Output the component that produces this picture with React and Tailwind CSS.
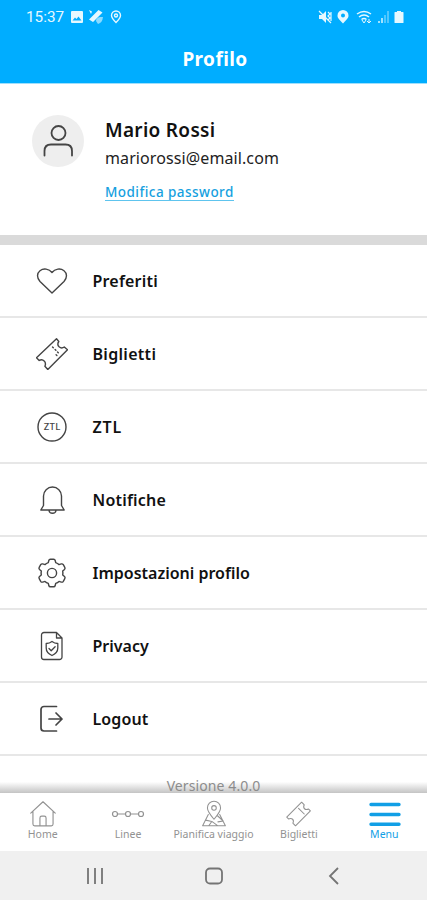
const menuItems = [
  { label: 'Preferiti', Icon: HeartIcon, tracking: 'tracking-[0.2px]' },
  { label: 'Biglietti', Icon: TicketIcon, tracking: 'tracking-[0.3px]' },
  { label: 'ZTL', Icon: ZtlIcon, tracking: 'tracking-[0.8px]' },
  { label: 'Notifiche', Icon: BellIcon, tracking: 'tracking-[0.2px]' },
  { label: 'Impostazioni profilo', Icon: GearIcon, tracking: 'tracking-[0px]' },
  { label: 'Privacy', Icon: PrivacyIcon, tracking: 'tracking-[0px]' },
  { label: 'Logout', Icon: LogoutIcon, tracking: 'tracking-[0.1px]' },
];

const tabs = [
  { label: 'Home', Icon: HomeIcon },
  { label: 'Linee', Icon: LinesIcon },
  { label: 'Pianifica viaggio', Icon: MapIcon },
  { label: 'Biglietti', Icon: SmallTicketIcon },
  { label: 'Menu', Icon: MenuIcon, active: true },
];

function LineIcon({ children, className = 'w-8 h-8', strokeWidth = 1.4 }) {
  return (
    <svg viewBox="0 0 32 32" className={className} fill="none" stroke="currentColor" strokeWidth={strokeWidth} strokeLinecap="round" strokeLinejoin="round">
      {children}
    </svg>
  );
}

function HeartIcon() {
  return (
    <LineIcon>
      <path d="M16 28 4 16.500C.8 13 .6 8.300 4 5.700c3.500-2.700 9-2 12 1.800 3-3.800 8.500-4.500 12-1.800 3.400 2.600 3.200 7.300 0 10.800Z" />
    </LineIcon>
  );
}

function TicketIcon() {
  return (
    <LineIcon>
      <path d="m20.500.800 2.300 2.700c-1.400 2-1 4 .3 5.300 1.400 1.300 3.400 1.500 5.200.2l3.200 2.700L11.800 31.500l-2.900-3.200c.9-2 .6-3.900-.7-5.200-1.300-1.400-3.300-1.600-5-.6L.5 19.800Z" />
      <path d="m16.500 9 .8.800m1.800 1.700.8.800m1.600 1.700.8.800m-2.200 2 .8.700" />
    </LineIcon>
  );
}

function ZtlIcon() {
  return (
    <LineIcon>
      <circle cx="16" cy="16" r="14" />
      <text x="16.200" y="19.200" textAnchor="middle" fontSize="9.500" fontWeight="500" letterSpacing="0.4" fill="currentColor" stroke="none">ZTL</text>
    </LineIcon>
  );
}

function BellIcon() {
  return (
    <LineIcon>
      <path d="M4.800 26 7.500 21.500V12a9 9 0 0 1 18 0v9.500l2.700 4.500ZM13 26.500c.5 3.700 6.500 3.700 7 0" />
    </LineIcon>
  );
}

function GearIcon() {
  return (
    <LineIcon>
      <path d="M12.800 3.500q.3-1.300 1.600-1.300h3.200q1.300 0 1.600 1.300l.5 2.200q2 .8 3.300 1.900l2.300-.7q1.300-.3 2 .8l1.500 2.600q.6 1.200-.3 2.100l-1.800 1.600q.4 2 0 4l1.800 1.600q.9.900.3 2.100l-1.500 2.600q-.7 1.100-2 .8L23 24.400q-1.300 1.200-3.300 1.900l-.5 2.200q-.3 1.300-1.600 1.300h-3.200q-1.300 0-1.600-1.300l-.5-2.200q-2-.7-3.300-1.900l-2.300.7q-1.300.3-2-.8l-1.500-2.600q-.6-1.200.3-2.100L5.300 18q-.4-2 0-4l-1.800-1.600q-.9-.900-.3-2.100l1.500-2.600q.7-1.100 2-.8l2.300.7q1.300-1.100 3.300-1.900Z" />
      <circle cx="16" cy="16" r="4.600" />
    </LineIcon>
  );
}

function PrivacyIcon() {
  return (
    <LineIcon strokeWidth={1.3}>
      <path d="M8 2.500h12.500l5.500 5.500v19a2.500 2.500 0 0 1-2.500 2.500H8a2.500 2.500 0 0 1-2.500-2.500V5A2.500 2.500 0 0 1 8 2.500ZM20.500 2.500V8H26" />
      <path d="M16 11.500c2 1.600 3.700 2 5.800 2v4.500c0 4-2.800 6.200-5.800 7.500-3-1.300-5.800-3.500-5.800-7.500v-4.500c2.100 0 3.800-.4 5.800-2Z" />
      <path d="m13 18.500 2.200 2.200 3.900-3.900" />
    </LineIcon>
  );
}

function LogoutIcon() {
  return (
    <LineIcon strokeWidth={1.7}>
      <path d="M20.500 3.500H8a3 3 0 0 0-3 3v18.500a3 3 0 0 0 3 3h12.500M13 16h13M20 10l6 6-6 6" />
    </LineIcon>
  );
}

function HomeIcon() {
  return (
    <LineIcon className="w-8 h-7" strokeWidth={1.3}>
      <path d="M2 15 16 2l14 13M4.500 13v14.500q0 2 2 2h19q2 0 2-2V13M12.500 29V20.500q0-2 2-2h3q2 0 2 2V29" />
    </LineIcon>
  );
}

function LinesIcon() {
  return (
    <svg viewBox="0 0 34 28" className="w-[34px] h-7" fill="none" stroke="currentColor" strokeWidth="1.2">
      <circle cx="4" cy="14" r="2.500" />
      <circle cx="17" cy="14" r="2.500" />
      <circle cx="30" cy="14" r="2.500" />
      <path d="M6.500 14h8m5 0h8" />
    </svg>
  );
}

function MapIcon() {
  return (
    <LineIcon className="w-8 h-7" strokeWidth={1.2}>
      <path d="M16 22C11 16 8.500 13 8.500 9a7.500 7.500 0 0 1 15 0c0 4-2.500 7-7.500 13Z" />
      <circle cx="16" cy="9" r="2.600" />
      <path d="M9.500 16.500 3 29.500h26l-6.500-13M6.500 23l7 1.500 7 5M10 29.500l3.500-5M20 18l6.500 6-6 1" />
    </LineIcon>
  );
}

function SmallTicketIcon() {
  return (
    <LineIcon className="w-8 h-7" strokeWidth={1.2}>
      <path d="m19 2.500 3 3c-1 2-.8 3.500.3 4.500s2.700 1.200 4.700.3l2 2L12 29.500l-3-3c1-2 .8-3.500-.3-4.500S6 20.800 4 21.700l-2-2ZM15.500 9.500l6.500 6.500" />
    </LineIcon>
  );
}

function MenuIcon() {
  return (
    <svg viewBox="0 0 34 28" className="ml-px w-[34px] h-7" fill="none" stroke="#119fe6" strokeWidth="3.4" strokeLinecap="round">
      <path d="M3 4.500h28M3 14.500h28M3 24.300h28" />
    </svg>
  );
}

function StatusBar() {
  return (
    <div className="flex h-[34px] items-center justify-between pl-[26px] pr-[23px] text-[#e6f8ff]">
      <div className="flex items-center gap-[6px]">
        <span className="w-[39px] font-[Roboto] text-[15.3px] whitespace-nowrap">15:37</span>
        <svg viewBox="0 0 12 12" className="w-3 h-3" fill="currentColor">
          <path fillRule="evenodd" d="M1 0h10q1 0 1 1v10q0 1-1 1H1q-1 0-1-1V1q0-1 1-1Zm.500 9.500h9l-3-4-2 2.500L4 6.500Z" />
        </svg>
        <svg viewBox="0 0 16 16" className="-ml-px w-4 h-4" fill="currentColor">
          <path d="M1 10.500 10.500 1l4 2.500L5 13ZM1 1l3 1.500L3 5Z" />
          <path d="M8 12c0-3 3-4.500 7-4-.5 4-2 6-5 7Z" opacity=".6" />
        </svg>
        <svg viewBox="0 0 12 14" className="w-3 h-3.5" fill="none" stroke="currentColor" strokeWidth="1.400">
          <path d="M6 12.500C3 9.500 1.500 8 1.500 5.500a4.500 4.500 0 0 1 9 0C10.500 8 9 9.500 6 12.500Z" />
          <circle cx="6" cy="5.500" r="1.500" />
        </svg>
      </div>
      <div className="flex items-center gap-[5px]">
        <svg viewBox="0 0 14 14" className="w-3.5 h-3.5" fill="currentColor">
          <path d="M1 5h3l4-4v12L4 9H1Z" />
          <path d="m1 1 12 12M10 2l2 2-2 2 2 2-2 2M13 2v9" fill="none" stroke="currentColor" strokeWidth="1.2" />
        </svg>
        <svg viewBox="0 0 12 14" className="mr-0.5 w-3 h-3.5" fill="currentColor">
          <path fillRule="evenodd" d="M6 13.500C2 9 .5 8 .5 5.500a5.500 5.500 0 0 1 11 0C11.500 8 10 9 6 13.500ZM6 3.500a2 2 0 1 0 0 4 2 2 0 0 0 0-4Z" />
        </svg>
        <svg viewBox="0 0 16 14" className="w-4 h-3.5" fill="none" stroke="currentColor" strokeWidth="1.500">
          <path d="M1 4q7-5 14 0M3 7q5-4 10 0M5.500 9.500q2.500-2 5 0" />
          <path d="m6 10 2 3 2-3M13 9v4M11 11l2 2 2-2" strokeWidth="1" />
        </svg>
        <svg viewBox="0 0 12 14" className="w-3 h-3.5" fill="currentColor">
          <path d="M1 11h2v2H1Zm3-3h2v5H4Z" opacity=".7" />
          <path d="M7 5h2v8H7Zm3-4h2v12h-2Z" opacity=".35" />
        </svg>
        <svg viewBox="0 0 10 14" className="w-2.5 h-3.5" fill="currentColor">
          <path d="M3 1h4v1h2q.500 0 .500.500v10q0 .500-.500.500H1q-.500 0-.500-.500v-10Q.500 2 1 2h2Z" />
        </svg>
      </div>
    </div>
  );
}

export default function App() {
  return (
    <div className="flex h-[900px] w-[427px] flex-col overflow-hidden bg-white font-['Noto_Sans',sans-serif] text-[#111]">
      <header className="h-[84px] shrink-0 border-b border-[#9fdffc] bg-[#00adff]">
        <StatusBar />
        <h1 className="pl-[3px] text-center text-[19px] leading-[50px] font-bold tracking-[0.4px] text-white">Profilo</h1>
      </header>

      <section className="flex h-[161px] shrink-0 border-b-[10px] border-[#dadada] pl-8 pt-[31px]">
        <div className="flex h-[52px] w-[52px] items-center justify-center rounded-full bg-[#eeeeee] text-[#444]">
          <LineIcon strokeWidth={1.8}>
            <circle cx="16.500" cy="8" r="7" />
            <path d="M2.500 30.500V26q0-6.500 6.500-6.500h14.500q6.500 0 6.500 6.500v4.500" />
          </LineIcon>
        </div>
        <div className="flex flex-col items-start pl-[21px] whitespace-nowrap">
          <h2 className="text-[19px] leading-[30px] font-semibold tracking-[0.3px]">Mario Rossi</h2>
          <p className="pt-px text-[16px] leading-[25px] tracking-[0.1px] text-[#222]">mariorossi@email.com</p>
          <a className="mt-[13px] border-b border-[#5ec4ee] text-[13.5px] leading-[16px] font-medium tracking-[0.45px] text-[#159fe0]">Modifica password</a>
        </div>
      </section>

      <nav className="shrink-0">
        {menuItems.map(({ label, Icon, tracking }) => (
          <div key={label} className="flex h-[73px] items-center border-b-2 border-[#e7e7e7] pt-px pl-9">
            <span className="w-[56.5px] shrink-0 text-[#444]"><Icon /></span>
            <span className={`text-[16px] font-semibold whitespace-nowrap ${tracking}`}>{label}</span>
          </div>
        ))}
      </nav>

      <div className="flex min-h-0 flex-1 flex-col justify-end bg-linear-to-b from-white from-70% to-[#c4c4c4]">
        <p className="-mb-0.5 text-center text-[14px] leading-[18px] tracking-[0.1px] text-[#8c8c8c]">Versione 4.0.0</p>
      </div>

      <nav className="flex h-[58px] shrink-0 bg-white">
        {tabs.map(({ label, Icon, active }) => (
          <div key={label} className={`flex flex-1 flex-col items-center pt-[7px] ${active ? 'text-[#119fe6]' : 'text-[#929292]'}`}>
            <Icon />
            <span className="text-[10.5px] leading-3 whitespace-nowrap">{label}</span>
          </div>
        ))}
      </nav>

      <footer className="flex h-[49px] shrink-0 items-center bg-[#f0f0f0] pt-px pl-[83px] text-[#747474]">
        <svg viewBox="0 0 24 24" className="w-6 h-6" stroke="currentColor" strokeWidth="1.800">
          <path d="M5 4v16M12 4v16M19 4v16" />
        </svg>
        <svg viewBox="0 0 24 24" className="ml-[95px] w-6 h-6" fill="none" stroke="currentColor" strokeWidth="1.800">
          <rect x="4" y="4.500" width="16" height="15" rx="4" />
        </svg>
        <svg viewBox="0 0 24 24" className="ml-[96px] w-6 h-6" fill="none" stroke="currentColor" strokeWidth="1.800">
          <path d="m16 4-8 8 8 8" />
        </svg>
      </footer>
    </div>
  );
}
